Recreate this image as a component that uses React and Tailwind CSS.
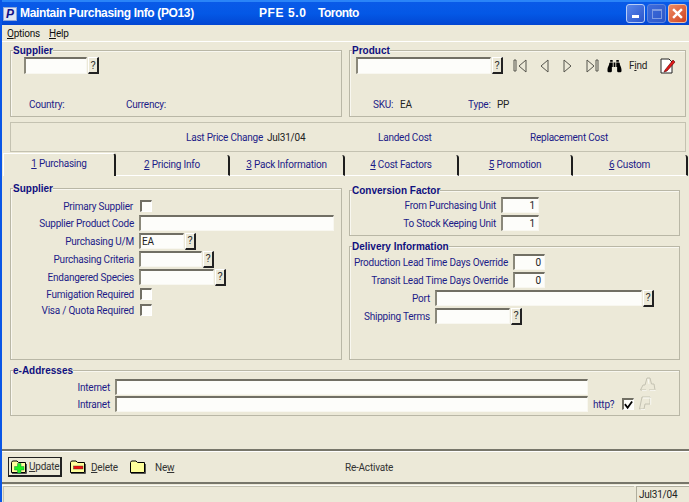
import React from "react";
import { FaBinoculars } from "react-icons/fa";

const inputCls = "h-full bg-[#fdfdfa] border-t-2 border-l-2 border-t-[#716f64] border-l-[#8a887a] border-b border-r border-b-[#f8f7f0] border-r-[#f8f7f0] text-[#222] flex items-center px-[1px]";

function Field({ className = "", value = "", right = false }) {
  return (
    <div className={`${inputCls} ${right ? "justify-end pr-[3px]" : ""} ${className}`}>{value}</div>
  );
}

function Help({ className = "" }) {
  return (
    <div className={`w-[11px] h-[17px] ml-[1px] bg-[#ece9d8] border-t border-l border-t-white border-l-white border-r-2 border-b-2 border-r-[#222] border-b-[#222] flex items-center justify-center text-[#333] text-[11px] leading-none ${className}`}>?</div>
  );
}

function Check({ checked = false }) {
  return (
    <div className="w-[12px] h-[12px] bg-[#fdfdfa] border-t-2 border-l-2 border-t-[#716f64] border-l-[#716f64] border-r border-b border-r-white border-b-white flex items-center justify-center">
      {checked && (
        <svg viewBox="0 0 10 10" className="w-[10px] h-[10px]"><path d="M1 4 L4 8 L9 1" fill="none" stroke="#000" strokeWidth="2" /></svg>
      )}
    </div>
  );
}

function Group({ title, className = "", children }) {
  return (
    <div className={`relative border border-[#b9b7a6] shadow-[inset_1px_1px_0_#f8f7f0] ${className}`}>
      <div className="absolute -top-[7px] left-[2px] bg-[#ece9d8] font-bold text-[#10107f] text-[10px] leading-[13px] tracking-[0px]" style={{ fontFamily: '"Liberation Sans", Arial, sans-serif' }}>{title}</div>
      {children}
    </div>
  );
}

function Row({ label, labelW, children, h = "h-[18px]" }) {
  return (
    <div className={`flex items-center ${h}`}>
      <div className={`${labelW} text-right pr-[5px] text-[#1c1c88] whitespace-nowrap`}>{label}</div>
      {children}
    </div>
  );
}

function Tab({ n, label, active = false, className = "" }) {
  return (
    <div className={`relative flex items-center justify-center ${active ? "h-[23px] w-[113px] pb-[3px] border-t border-l border-t-white border-l-white" : "h-[21px] mt-[2px] pb-[1px] border-b border-b-white"} ${className} border-r-2 border-r-[#1d1d1d] rounded-tr-[3px] text-[#1c1c88] whitespace-nowrap`}>
      <span><span className="underline">{n}</span> {label}</span>
    </div>
  );
}

function Nav({ d }) {
  return (
    <svg viewBox="0 0 14 16" className="w-[14px] h-[16px]">
      <path d={d} fill="#ece9d8" stroke="#55544c" strokeWidth="1" />
    </svg>
  );
}

function Folder({ mark }) {
  return (
    <svg viewBox="0 0 16 14" className="w-[16px] h-[14px]">
      <path d="M0.5 12.5 V2.5 L1.5 1 H6 L7.5 2.5 H14.5 V12.5 Z" fill="#ffff9c" stroke="#000" />
      <path d="M1 13.5 H15.5 V4" fill="none" stroke="#555" />
      {mark === "plus" && <path d="M6.5 3.5 H10 V6.5 H13 V10 H10 V13 H6.5 V10 H3.5 V6.5 H6.5 Z" fill="#20f020" stroke="#064" strokeWidth="0.4" />}
      {mark === "minus" && <rect x="3.5" y="6" width="9.5" height="3" fill="#f01010" stroke="#333" strokeWidth="0.4" />}
    </svg>
  );
}

function Fx({ wide }) {
  return (
    <svg viewBox="0 0 17 14" className="w-[17px] h-[14px]">
      <path d={wide ? "M1.5 13 L4 8 H6 L8 1 H11 L12.5 7 H15 L16 13 M1.5 13 H7 M10 13 H15" : "M1.5 13 L4 1 H12 V8 H7 L6 13 H1.5"} fill="none" stroke="#c4c2b2" />
      <path d={wide ? "M3 13.7 H7.5 M10.5 13.7 H16.5 M9 2 L10 7" : "M2.5 13.7 H7 M5 2 H12.7 V8.7"} fill="none" stroke="#fbfbf5" />
    </svg>
  );
}

export default function App() {
  return (
    <div className="w-[689px] h-[502px] overflow-hidden flex flex-col bg-[#ece9d8] border-l-2 border-l-[#0a56e6] text-[10px] leading-[13px] tracking-[-0.22px] text-[#222]" style={{ fontFamily: 'Roboto, "Liberation Sans", Arial, sans-serif' }}>
      {/* Title bar */}
      <div className="h-[25px] -ml-[2px] shrink-0 flex items-center bg-gradient-to-b from-[#0a5ae8] via-[#0458e6] to-[#0346d2] border-t-2 border-t-[#2a84f8] pl-[3px] pr-[2px] text-white font-bold text-[12px]" style={{ fontFamily: '"Liberation Sans", Arial, sans-serif' }}>
        <div className="w-[14px] h-[14px] bg-[#dfe6f4] border border-[#8fa6d8] flex items-center justify-center mr-[3px]">
          <span className="text-[#10108a] italic font-bold text-[12px] leading-none">P</span>
        </div>
        <span className="w-[239px] whitespace-nowrap tracking-[-0.35px]">Maintain Purchasing Info (PO13)</span>
        <span className="w-[59px] whitespace-nowrap tracking-[0.6px]">PFE 5.0</span>
        <span className="whitespace-nowrap tracking-[-0.5px]">Toronto</span>
        <div className="ml-auto flex gap-[2px]">
          <div className="w-[19px] h-[19px] rounded-[3px] border border-[#b8cdf6] bg-gradient-to-br from-[#5b87ea] to-[#2a55cc] flex items-end pl-[5px] pb-[4px]"><div className="w-[7px] h-[3px] bg-white" /></div>
          <div className="w-[19px] h-[19px] rounded-[3px] border border-[#5f86de] bg-gradient-to-br from-[#3e6cdc] to-[#2c57c8] flex items-center justify-center"><div className="w-[10px] h-[10px] border border-[#7d9be2] border-t-2" /></div>
          <div className="w-[19px] h-[19px] rounded-[3px] border border-[#eec0a8] bg-gradient-to-br from-[#ec8a63] to-[#d0401c] flex items-center justify-center">
            <svg viewBox="0 0 10 10" className="w-[11px] h-[11px]"><path d="M1 1 L9 9 M9 1 L1 9" stroke="#fff" strokeWidth="2.2" /></svg>
          </div>
        </div>
      </div>

      {/* Menu */}
      <div className="h-[16px] shrink-0 flex items-center pl-[5px] text-[#111]">
        <span className="w-[42px]"><span className="underline">O</span>ptions</span>
        <span><span className="underline">H</span>elp</span>
      </div>
      <div className="h-[1px] shrink-0 bg-white" />

      {/* Header groups */}
      <div className="flex gap-[7px] pl-[8px] mt-[8px] shrink-0">
        <Group title="Supplier" className="w-[332px] h-[67px]">
          <div className="flex h-[17px] mt-[6px] ml-[13px]">
            <Field className="w-[63px] h-[16px]" />
            <Help />
          </div>
          <div className="flex mt-[24px] ml-[18px] text-[#1c1c88]">
            <span className="w-[97px]">Country:</span>
            <span>Currency:</span>
          </div>
        </Group>
        <Group title="Product" className="w-[337px] h-[67px]">
          <div className="flex items-center h-[17px] mt-[6px] ml-[6px]">
            <Field className="w-[135px] h-[16px]" />
            <Help />
            <div className="flex items-center ml-[10px] gap-[10px]">
              <Nav d="M1 2 V13 H3 V2 Z M13 2 V14 L6 8 Z" />
              <Nav d="M11 2 V14 L4 8 Z" />
              <Nav d="M3 2 V14 L10 8 Z" />
              <Nav d="M2 2 V14 L9 8 Z M11 2 V13 H13 V2 Z" />
            </div>
            <FaBinoculars className="w-[15px] h-[14px] text-black ml-[8px]" />
            <span className="ml-[7px] w-[17px] text-[#222]">F<span className="underline">i</span>nd</span>
            <svg viewBox="0 0 16 16" className="w-[16px] h-[16px] ml-[14px]">
              <path d="M1 1 H9 L12 4 V15 H1 Z" fill="#fff" stroke="#222" />
              <path d="M5 12 L13 2 L15 4 L7 13 L4 14 Z" fill="#e01818" stroke="#500" strokeWidth="0.6" />
            </svg>
          </div>
          <div className="flex mt-[24px] ml-[23px] text-[#1c1c88]">
            <span className="w-[27px]">SKU:</span>
            <span className="w-[68px] text-[#222]">EA</span>
            <span className="w-[29px]">Type:</span>
            <span className="text-[#222]">PP</span>
          </div>
        </Group>
      </div>

      {/* Info bar */}
      <div className="ml-[8px] mt-[5px] w-[676px] h-[30px] shrink-0 border border-[#c4c2b1] flex items-center text-[#1c1c88]">
        <span className="ml-[175px] w-[81px] whitespace-nowrap">Last Price Change</span>
        <span className="w-[111px] text-[#222]">Jul31/04</span>
        <span className="w-[152px] whitespace-nowrap">Landed Cost</span>
        <span className="whitespace-nowrap">Replacement Cost</span>
      </div>

      {/* Tabs */}
      <div className="flex ml-[1px] mt-[1px] h-[23px] shrink-0">
        <Tab n="1" label="Purchasing" active />
        <Tab n="2" label="Pricing Info" className="w-[114px]" />
        <Tab n="3" label="Pack Information" className="w-[115px]" />
        <Tab n="4" label="Cost Factors" className="w-[114px]" />
        <Tab n="5" label="Promotion" className="w-[114px]" />
        <Tab n="6" label="Custom" className="w-[115px]" />
      </div>

      {/* Tab body */}
      <div className="flex gap-[7px] pl-[8px] shrink-0">
        <Group title="Supplier" className="w-[332px] h-[172px] mt-[12px] pt-[9px]">
          <Row label="Primary Supplier" labelW="w-[127px]" h="h-[16px]"><div className="ml-[2px]"><Check /></div></Row>
          <Row label="Supplier Product Code" labelW="w-[128px]" h="h-[18px]"><div className="h-[16px]"><Field className="w-[195px]" /></div></Row>
          <Row label="Purchasing U/M" labelW="w-[128px]"><div className="h-[16px]"><Field className="w-[45px]" value="EA" /></div><Help /></Row>
          <Row label="Purchasing Criteria" labelW="w-[128px]"><div className="h-[16px]"><Field className="w-[63px]" /></div><Help /></Row>
          <Row label="Endangered Species" labelW="w-[128px]"><div className="h-[16px]"><Field className="w-[75px]" /></div><Help /></Row>
          <Row label="Fumigation Required" labelW="w-[128px]" h="h-[16px]"><div className="ml-[1px]"><Check /></div></Row>
          <Row label="Visa / Quota Required" labelW="w-[128px]" h="h-[16px]"><div className="ml-[1px]"><Check /></div></Row>
        </Group>
        <div className="flex flex-col gap-[10px] mt-[14px]">
          <Group title="Conversion Factor" className="w-[331px] h-[46px] pt-[5px]">
            <Row label="From Purchasing Unit" labelW="w-[151px]"><div className="h-[16px]"><Field className="w-[38px]" value="1" right /></div></Row>
            <Row label="To Stock Keeping Unit" labelW="w-[151px]"><div className="h-[16px]"><Field className="w-[38px]" value="1" right /></div></Row>
          </Group>
          <Group title="Delivery Information" className="w-[331px] h-[114px] pt-[6px]">
            <Row label="Production Lead Time Days Override" labelW="w-[163px]"><div className="h-[16px]"><Field className="w-[32px]" value="0" right /></div></Row>
            <Row label="Transit Lead Time Days Override" labelW="w-[163px]"><div className="h-[16px]"><Field className="w-[32px]" value="0" right /></div></Row>
            <Row label="Port" labelW="w-[85px]"><div className="h-[16px]"><Field className="w-[207px]" /></div><Help /></Row>
            <Row label="Shipping Terms" labelW="w-[85px]"><div className="h-[16px]"><Field className="w-[75px]" /></div><Help /></Row>
          </Group>
        </div>
      </div>

      {/* e-Addresses */}
      <div className="pl-[8px] mt-[10px] shrink-0">
        <Group title="e-Addresses" className="w-[670px] h-[46px] pt-[7px]">
          <Row label="Internet" labelW="w-[104px]" h="h-[18px]">
            <div className="h-[16px]"><Field className="w-[473px]" /></div>
            <div className="ml-[51px] mb-[6px]"><Fx wide /></div>
          </Row>
          <Row label="Intranet" labelW="w-[104px]" h="h-[16px]">
            <div className="h-[16px]"><Field className="w-[473px]" /></div>
            <span className="ml-[5px] w-[29px] text-[#1c1c88]">http?</span>
            <Check checked />
            <div className="ml-[4px] mb-[3px]"><Fx /></div>
          </Row>
        </Group>
      </div>

      {/* Toolbar */}
      <div className="mt-[33px] h-[2px] shrink-0 bg-[#77766a] border-b border-b-white box-content" />
      <div className="h-[30px] shrink-0 flex items-center pl-[6px] text-[#333]">
        <div className="w-[54px] h-[20px] border-2 border-[#222] border-t border-l flex items-center pl-[2px] gap-[2px]">
          <Folder mark="plus" />
          <span><span className="underline">U</span>pdate</span>
        </div>
        <div className="ml-[8px] w-[60px] flex items-center gap-[5px]">
          <Folder mark="minus" />
          <span><span className="underline">D</span>elete</span>
        </div>
        <div className="w-[215px] flex items-center gap-[9px]">
          <Folder />
          <span>Ne<span className="underline">w</span></span>
        </div>
        <span>Re-Activate</span>
      </div>
      <div className="h-[2px] shrink-0 bg-[#77766a]" />

      {/* Status */}
      <div className="flex-1 flex mt-[1px] border-t border-t-[#fbfbf5]">
        <div className="flex-1 border-t border-l border-[#c4c2b1] ml-[1px] mr-[2px]" />
        <div className="w-[53px] border-t border-l border-[#b0ae9d] pl-[2px] pt-[1px] text-[#222]">Jul31/04</div>
      </div>
    </div>
  );
}
